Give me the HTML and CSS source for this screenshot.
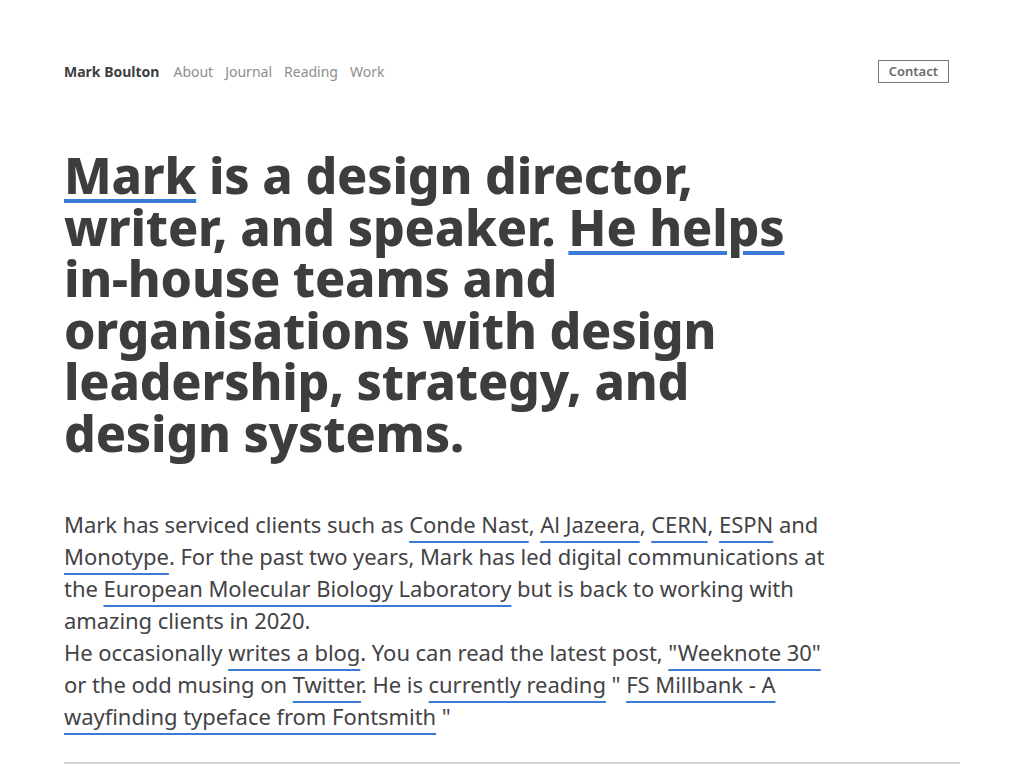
FILE: index.html
```html
<!DOCTYPE html>
<html lang="en">
<head>
<meta charset="utf-8">
<title>Mark Boulton</title>
<link rel="stylesheet" href="styles.css">
</head>
<body>
<div class="page">
  <header class="site-header">
    <nav class="nav">
      <a class="brand" href="#">Mark Boulton</a>
      <a class="nav-link" href="#">About</a>
      <a class="nav-link" href="#">Journal</a>
      <a class="nav-link" href="#">Reading</a>
      <a class="nav-link" href="#">Work</a>
    </nav>
    <a class="contact" href="#">Contact</a>
  </header>

  <main class="intro">
    <h1 class="headline"><a href="#">Mark</a> is a design director, writer, and speaker. <a href="#">He helps</a> in-house teams and organisations with design leadership, strategy, and design systems.</h1>
    <div class="bio">
      <p>Mark has serviced clients such as <a href="#">Conde Nast</a>, <a href="#">Al Jazeera</a>, <a href="#">CERN</a>, <a href="#">ESPN</a> and <a href="#">Monotype</a>. For the past two years, Mark has led digital communications at the <a href="#">European Molecular Biology Laboratory</a> but is back to working with amazing clients in 2020.</p>
      <p>He occasionally <a href="#">writes a blog</a>. You can read the latest post, <a href="#">"Weeknote 30"</a> or the odd musing on <a href="#">Twitter</a>. He is <a href="#">currently reading</a> " <a href="#">FS Millbank - A wayfinding typeface from Fontsmith</a> "</p>
    </div>
  </main>
  <hr class="rule">
</div>
</body>
</html>
```
FILE: styles.css
```css
* { box-sizing: border-box; }
html, body { margin: 0; padding: 0; background: #fff; }
body {
  font-family: "Noto Sans", "Open Sans", sans-serif;
  color: #3d3d40;
}
.page {
  width: 896px;
  margin-left: 64px;
}
.site-header {
  display: flex;
  align-items: center;
  justify-content: space-between;
  margin-top: 60px;
  padding-right: 11px;
}
.nav {
  display: flex;
  align-items: baseline;
  gap: 12px;
  font-size: 14px;
  line-height: 21px;
}
.nav a { text-decoration: none; }
.brand {
  font-weight: 700;
  color: #3d3d40;
  margin-right: 2px;
}
.nav-link { color: #8d8d90; }
.contact {
  display: block;
  border: 1px solid #77777a;
  color: #6a6a6d;
  font-size: 13px;
  font-weight: 600;
  line-height: 21px;
  padding: 0 10px;
  text-decoration: none;
}
.intro {
  max-width: 766px;
  margin-top: 67px;
}
.headline {
  margin: 0;
  font-size: 50px;
  font-weight: 800;
  line-height: 51.5px;
  letter-spacing: -0.2px;
  color: #3d3d40;
}
.headline a {
  color: inherit;
  text-decoration: underline;
  text-decoration-color: #3a7bd5;
  text-decoration-thickness: 4px;
  text-underline-offset: 5px;
  text-decoration-skip-ink: auto;
}
.bio {
  margin-top: 49px;
  font-size: 22px;
  line-height: 32px;
  letter-spacing: -0.05px;
  color: #434346;
}
.bio p { margin: 0; }
.bio a {
  color: inherit;
  text-decoration: underline;
  text-decoration-color: #3a7bd5;
  text-decoration-thickness: 2px;
  text-underline-offset: 8px;
}
.rule {
  margin: 30px 0 0;
  border: 0;
  border-top: 2px solid #d4d4d6;
  height: 0;
}
```
